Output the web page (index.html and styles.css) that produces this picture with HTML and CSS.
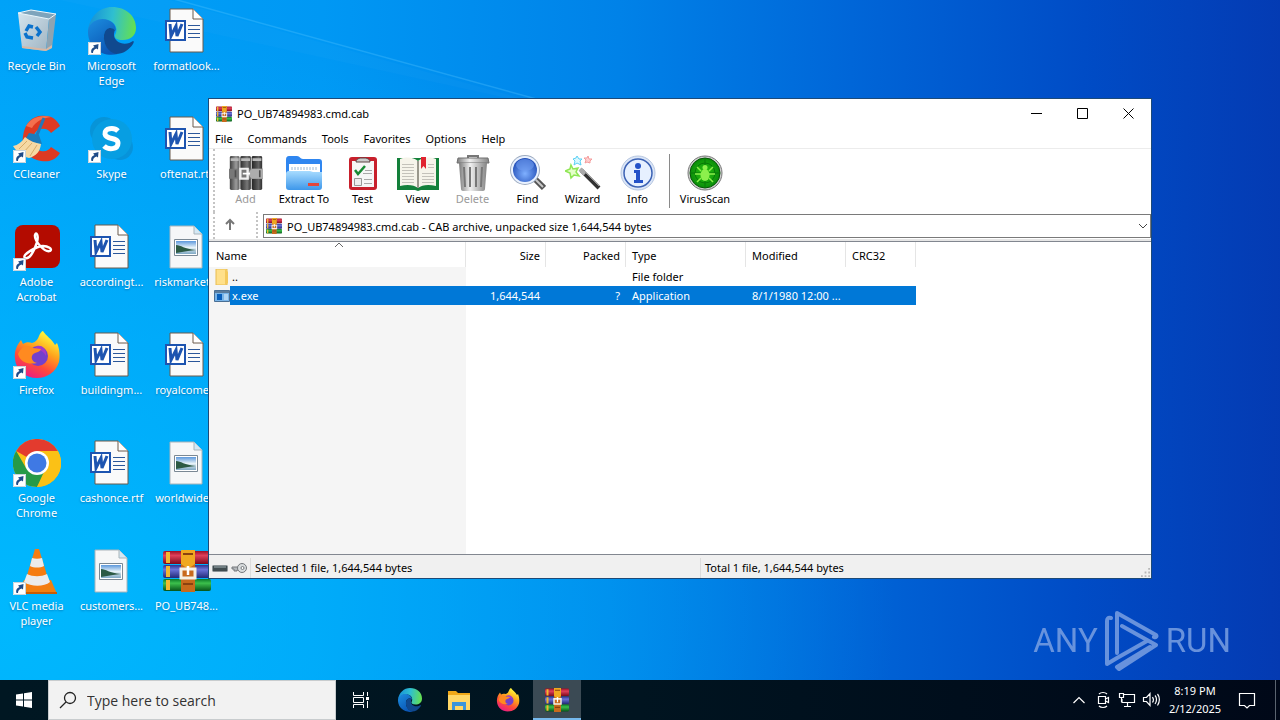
FILE: index.html
```html
<!DOCTYPE html>
<html lang="en">
<head>
    <meta charset="UTF-8">
    <meta name="viewport" content="width=device-width, initial-scale=1.0">
    <title>Desktop</title>
    <link rel="stylesheet" href="styles.css">
</head>
<body>
    <!-- shared icons -->
    <svg class="sprite" aria-hidden="true">
        <defs>
            <linearGradient id="edge-top" x1="0" y1="0.4" x2="1" y2="0.5">
                <stop offset="0" stop-color="#1590d8"/><stop offset="0.5" stop-color="#2fbfd0"/><stop offset="1" stop-color="#66e04e"/>
            </linearGradient>
            <linearGradient id="edge-left" x1="0" y1="0" x2="0.6" y2="1">
                <stop offset="0" stop-color="#1c8ee0"/><stop offset="1" stop-color="#0a55b4"/>
            </linearGradient>
            <linearGradient id="fox" x1="0.8" y1="0" x2="0.3" y2="1">
                <stop offset="0.1" stop-color="#fff23a"/><stop offset="0.4" stop-color="#ffa41c"/><stop offset="0.7" stop-color="#ff4a3a"/><stop offset="1" stop-color="#ea1a86"/>
            </linearGradient>
            <linearGradient id="bin" x1="0" y1="0" x2="1" y2="1">
                <stop offset="0" stop-color="#d4e4ee"/><stop offset="1" stop-color="#9fb4c2"/>
            </linearGradient>
            <linearGradient id="red-book" x1="0" y1="0" x2="0" y2="1">
                <stop offset="0" stop-color="#9c1026"/><stop offset="0.35" stop-color="#e0405a"/><stop offset="1" stop-color="#7c0a1c"/>
            </linearGradient>
            <linearGradient id="blue-book" x1="0" y1="0" x2="0" y2="1">
                <stop offset="0" stop-color="#2c3490"/><stop offset="0.35" stop-color="#6a72d8"/><stop offset="1" stop-color="#222a78"/>
            </linearGradient>
            <linearGradient id="green-book" x1="0" y1="0" x2="0" y2="1">
                <stop offset="0" stop-color="#0a7a28"/><stop offset="0.35" stop-color="#3cc04c"/><stop offset="1" stop-color="#06541a"/>
            </linearGradient>
            <linearGradient id="folder" x1="0" y1="0" x2="0" y2="1">
                <stop offset="0" stop-color="#a8dcff"/><stop offset="1" stop-color="#3d97ea"/>
            </linearGradient>
            <linearGradient id="metal" x1="0" y1="0" x2="1" y2="0">
                <stop offset="0" stop-color="#7c7c7c"/><stop offset="0.4" stop-color="#f0f0f0"/><stop offset="1" stop-color="#848484"/>
            </linearGradient>
            <radialGradient id="lens" cx="0.5" cy="0.65" r="0.6">
                <stop offset="0" stop-color="#7fb0ff"/><stop offset="1" stop-color="#2450b8"/>
            </radialGradient>
            <radialGradient id="radar">
                <stop offset="0" stop-color="#2cc810"/><stop offset="1" stop-color="#0a8c0a"/>
            </radialGradient>
            <linearGradient id="sky" x1="0" y1="0" x2="0" y2="1">
                <stop offset="0" stop-color="#5c98dc"/><stop offset="0.5" stop-color="#e6f2f8"/><stop offset="1" stop-color="#7ea8c4"/>
            </linearGradient>
        </defs>

        <symbol id="i-bin" viewBox="0 0 48 48">
            <path d="M5 6 18 3l25 4-7 5z" fill="#7ea4bc"/>
            <path d="m5 6 31 6-3 32-24-3z" fill="url(#bin)"/>
            <path d="m36 12 7-5-4 34-6 3z" fill="#8ea4b2"/>
            <path d="M5 6 18 3l25 4-7 5z" fill="none" stroke="#eef6fa"/>
            <path d="m9 39 24 3 6-4v3l-6 3-24-3z" fill="#d8b8a4"/>
            <g fill="none" stroke="#0b72cc" stroke-width="3.4"><path d="m13 24 3-5 4 1M23 20l4 5-3 4M20 31l-6-1-2-4"/></g>
        </symbol>
        <symbol id="i-edge" viewBox="0 0 48 48">
            <path d="M0 23C2 9 12 0 24 0c14 0 24 9 24 21 0 8-6 12-13 12-6 0-9-2-8-5 3-4 2-13-8-15C10 12 3 16 0 23z" fill="url(#edge-top)"/>
            <path d="M0 23c2-9 12-13 20-10 6 2 8 7 8 11-4-5-11-3-12 4-1 8 4 17 14 19C14 51-1 40 0 23z" fill="url(#edge-left)"/>
            <path d="M16 28c1-7 7-9 11-5-2 5-1 8 2 11 5 4 12 3 16 0 1 0 1 1 0 3-4 6-10 10-17 10-8-2-13-10-12-19z" fill="#10498f"/>
        </symbol>
        <symbol id="i-word" viewBox="2 0 48 48">
            <path d="M9 2h23l10 10v33H9z" fill="#fafafa" stroke="#6b5a4c"/>
            <path d="M32 2v10h10" fill="#fff" stroke="#6b5a4c"/>
            <path d="M27 18.500h12M27 22.500h12M27 26.500h12M27 30.500h12" stroke="#2b579a"/>
            <path d="M4 13h21v21H4z" fill="#1d54b0"/>
            <path d="M6 15h17v17H6z" fill="#fff"/>
            <path d="m9 17 1 12 5-10 1 10 5-12" fill="none" stroke="#1d54b0" stroke-width="3"/>
        </symbol>
        <symbol id="i-image" viewBox="1 0 48 48">
            <path d="M8 3h24l8 8v34H8z" fill="#f6f7f8" stroke="#a9b4ba"/>
            <path d="M32 3v8h8" fill="#d4e8f4" stroke="#a9b4ba"/>
            <path d="M12.500 16.500h23v16h-23z" fill="#fff" stroke="#7a8894"/>
            <path d="M14 18h20v13H14z" fill="url(#sky)"/>
            <path d="M14 22c5 0 8 4 20 5l-8 1-12 2z" fill="#2c5a44"/>
        </symbol>
        <symbol id="i-ccleaner" viewBox="0 0 48 48">
            <path d="m47 11-9 7c-3-5-12-6-16 0-5 7-1 17 6 18 5 1 8-1 10-4l9 6c-5 8-12 9-19 8-13-2-20-12-18-25C12 7 21-1 33 1c6 0 11 4 14 10z" fill="#dd3a22"/>
            <path d="M13 11C18 2 29-1 38 2c-8 1-15 4-19 11z" fill="#f4704e"/>
            <path d="m31 3-7 17" stroke="#2377b8" stroke-width="3"/>
            <path d="m16 18 10 2 3 9-8-1-8-5z" fill="#1b7cbc"/>
            <path d="M12 22c5 4 10 6 16 7-1 8-5 12-12 14C9 41 4 37 0 31c5-1 9-4 12-9z" fill="#f6d9a4"/>
            <path d="m14 26-8 8m13-6-9 10m14-8-7 11" stroke="#d8ab68"/>
        </symbol>
        <symbol id="i-skype" viewBox="0 0 48 48">
            <circle cx="16" cy="16" r="14" fill="#0794d8"/><circle cx="32" cy="32" r="13" fill="#0793da"/>
            <circle cx="24" cy="24" r="20" fill="#079ee2"/>
            <path d="M30 16c-4-4-14-3-13 3 1 6 13 3 13 9 0 7-10 7-14 3" fill="none" stroke="#fff" stroke-width="5"/>
        </symbol>
        <symbol id="i-acrobat" viewBox="0 0 48 48">
            <rect x="2" y="2" width="45" height="43" rx="8" fill="#b30b00"/>
            <path d="M12 35c-4-3 12-12 18-12 5 0 10 3 7 5-5 2-16-10-15-16 1-4 4 0 2 7-3 10-8 18-12 16z" fill="none" stroke="#fff" stroke-width="2.4"/>
        </symbol>
        <symbol id="i-firefox" viewBox="0 0 48 48">
            <path d="M2 28C1 20 4 14 8 9l2 4c3-2 6-2 9-1 4-1 6-4 7-7 1-3 3-5 4-5 3 5 9 8 12 14l2-2c3 7 3 14 2 19-3 10-12 16-22 16C12 47 3 39 2 28z" fill="url(#fox)"/>
            <circle cx="25" cy="25" r="10" fill="#7340cc"/>
            <path d="M24 15c6-1 10 4 9 10-3-6-8-7-13-5z" fill="#a33ac8"/>
            <path d="M5 23c4-8 9-10 15-6l8 1c-1 4-8 3-9 7-1 3 1 6 5 7-9 2-17-1-19-9z" fill="#ff8a20"/>
        </symbol>
        <symbol id="i-chrome" viewBox="0 0 48 48">
            <circle cx="24" cy="24" r="24" fill="#fbc116"/>
            <path d="M24 24 3.200 12A24 24 0 0 1 44.800 12z" fill="#e33b2e"/>
            <path d="M24 24h11L24 48A24 24 0 0 1 3.200 12L13 29z" fill="#269a47"/>
            <path d="M24 12h21a24 24 0 0 1-21 36l11-18z" fill="#fbc116"/>
            <circle cx="24" cy="24" r="12" fill="#fff"/><circle cx="24" cy="24" r="9.500" fill="#3f79e4"/>
        </symbol>
        <symbol id="i-vlc" viewBox="0 0 48 48">
            <path d="M11 33h27l6 14H5z" fill="#f08010"/><path d="M5 45h39v2H5z" fill="#c85c04"/>
            <path d="M22 2h4l11 36c-6 6-20 6-26 0z" fill="#f57d12"/>
            <path d="m19 11-2 8c4 2 10 2 14 0l-2-8c-3 1-7 1-10 0zM14 27l-3 8c7 5 20 5 26 0l-3-8c-6 3-14 3-20 0z" fill="#ececec"/>
        </symbol>
        <symbol id="i-winrar" viewBox="0 0 48 42" preserveAspectRatio="none">
            <rect y="1" width="48" height="13" rx="2" fill="url(#red-book)"/>
            <rect y="15" width="48" height="13" rx="2" fill="url(#blue-book)"/>
            <rect y="29" width="48" height="12" rx="2" fill="url(#green-book)"/>
            <path d="M3 2h4v11H3zM3 16h4v11H3zM3 30h4v10H3z" fill="#f0b830"/>
            <path d="M18 0h14v42H18z" fill="#c86a1c"/><path d="M18 0h14v14l-7 5-7-5z" fill="#f0a820"/>
            <path d="M20 4h10M20 34h10" stroke="#8a4210" stroke-width="2"/>
            <path d="M18 19h14v9H18z" fill="none" stroke="#f4f0e4" stroke-width="3"/>
            <path d="M25 16v9" stroke="#fff" stroke-width="2.500"/>
        </symbol>
        <symbol id="i-shortcut" viewBox="0 0 13 13">
            <path d="M0 0h13v13H0z" fill="#fff"/><path d="M.5.5h12v12H.5z" fill="none" stroke="#c8d4dc"/>
            <path d="M3.500 11c-1-3 .5-5 3-6L5 3.500 10.500 2 10 7.500 8.500 6.500C6 7.500 5 8.500 5 11z" fill="#1f4b88"/>
        </symbol>
    </svg>

    <main class="desktop">
        <svg class="beam" viewBox="0 0 600 120" aria-hidden="true">
            <path d="M60 0h110l400 112z" fill="#fff" opacity=".02"/>
            <path d="M170-2 540 100" stroke="#5cc8ff" stroke-width="1.500" opacity=".3"/>
        </svg>

        <div class="shortcuts">
            <button class="shortcut"><svg><use href="#i-bin"/></svg><span>Recycle Bin</span></button>
            <button class="shortcut"><svg><use href="#i-ccleaner"/></svg><svg class="arrow"><use href="#i-shortcut"/></svg><span>CCleaner</span></button>
            <button class="shortcut"><svg><use href="#i-acrobat"/></svg><svg class="arrow"><use href="#i-shortcut"/></svg><span>Adobe<br>Acrobat</span></button>
            <button class="shortcut"><svg><use href="#i-firefox"/></svg><svg class="arrow"><use href="#i-shortcut"/></svg><span>Firefox</span></button>
            <button class="shortcut"><svg><use href="#i-chrome"/></svg><svg class="arrow"><use href="#i-shortcut"/></svg><span>Google<br>Chrome</span></button>
            <button class="shortcut"><svg><use href="#i-vlc"/></svg><svg class="arrow"><use href="#i-shortcut"/></svg><span>VLC media<br>player</span></button>
            <button class="shortcut"><svg><use href="#i-edge"/></svg><svg class="arrow"><use href="#i-shortcut"/></svg><span>Microsoft<br>Edge</span></button>
            <button class="shortcut"><svg><use href="#i-skype"/></svg><svg class="arrow"><use href="#i-shortcut"/></svg><span>Skype</span></button>
            <button class="shortcut"><svg><use href="#i-word"/></svg><span>accordingt...</span></button>
            <button class="shortcut"><svg><use href="#i-word"/></svg><span>buildingm...</span></button>
            <button class="shortcut"><svg><use href="#i-word"/></svg><span>cashonce.rtf</span></button>
            <button class="shortcut"><svg><use href="#i-image"/></svg><span>customers...</span></button>
            <button class="shortcut"><svg><use href="#i-word"/></svg><span>formatlook...</span></button>
            <button class="shortcut"><svg><use href="#i-word"/></svg><span>oftenat.rtf</span></button>
            <button class="shortcut"><svg><use href="#i-image"/></svg><span>riskmarket...</span></button>
            <button class="shortcut"><svg><use href="#i-word"/></svg><span>royalcome...</span></button>
            <button class="shortcut"><svg><use href="#i-image"/></svg><span>worldwide...</span></button>
            <button class="shortcut"><svg class="archive"><use href="#i-winrar"/></svg><span>PO_UB748...</span></button>
        </div>

        <div class="watermark">
            <span>ANY</span>
            <svg viewBox="0 0 54 62" aria-hidden="true">
                <g fill="none" stroke="currentColor" stroke-width="4" stroke-linejoin="round" stroke-linecap="round">
                    <path d="M6 8c-3-1-4 1-4 3v43l10-6 30-17"/>
                    <path d="M12 43V3l39 22c1 1 0 3-2 2"/>
                    <path d="m17 16 34 19-37 24-2-2 33-20"/>
                </g>
            </svg>
            <span>RUN</span>
        </div>

        <section class="window">
            <header class="titlebar">
                <svg class="app-icon"><use href="#i-winrar"/></svg>
                <span class="title">PO_UB74894983.cmd.cab</span>
                <button class="caption" aria-label="Minimize"><svg viewBox="0 0 11 11"><path d="M0 5.500h11"/></svg></button>
                <button class="caption" aria-label="Maximize"><svg viewBox="0 0 11 11"><path d="M.5.5h10v10H.5z"/></svg></button>
                <button class="caption" aria-label="Close"><svg viewBox="0 0 11 11"><path d="m.5.5 10 10m0-10-10 10"/></svg></button>
            </header>

            <nav class="menu">
                <button>File</button>
                <button>Commands</button>
                <button>Tools</button>
                <button>Favorites</button>
                <button>Options</button>
                <button>Help</button>
            </nav>

            <div class="bars">
                <div class="toolbar">
                    <button disabled>
                        <svg viewBox="0 0 36 36" class="gray"><g transform="rotate(90 18 18)"><use href="#i-winrar" x="1" y="1" width="34" height="34"/></g></svg>
                        Add
                    </button>
                    <button class="wide">
                        <svg viewBox="0 0 36 36">
                            <path d="M0 5c0-3 1-4 3-4h8c3 0 3 3 6 3h16c2 0 3 1 3 3v16H0z" fill="#2f86f0"/>
                            <path d="M3 9h31v12H3z" fill="#fff"/><path d="M6 12v3m3-3v3m3-3v3m3-3v3m3-3v3m3-3v3m3-3v3m3-3v3m3-3v3" stroke="#9cb8d4"/>
                            <path d="M0 19c0-2 1-3 3-3h21l3 1h9v15c0 2-1 3-3 3H3c-2 0-3-1-3-3z" fill="url(#folder)"/>
                            <path d="M22 28h11v3H22z" fill="#e4463a"/>
                        </svg>
                        Extract To
                    </button>
                    <button>
                        <svg viewBox="0 0 36 36">
                            <rect x="4" y="2" width="28" height="33" rx="3" fill="#c8202c"/>
                            <path d="M7 6h22v26H7z" fill="#f6f6f6"/>
                            <path d="M11 7c0-3 2-3 4-4h6c2 1 4 1 4 4z" fill="#ccc" stroke="#5c4444"/>
                            <path d="m10 15 3 4 7-8" fill="none" stroke="#178a34" stroke-width="2.500"/>
                            <path d="M9.500 23.500h7v7h-7z" fill="#eee" stroke="#999"/>
                            <path d="M20 15.500h7M18 18.500h9M19 24.500h8M19 28.500h8" stroke="#a8a8a8"/>
                        </svg>
                        Test
                    </button>
                    <button>
                        <svg viewBox="0 0 42 36" class="book">
                            <path d="M0 3h42v32H24l-3 1-3-1H0z" fill="#13803a"/>
                            <path d="M3 4c8-3 14-1 18 2 4-3 10-5 18-2v27c-8-2-14-1-18 2-4-3-10-4-18-2z" fill="#f6f4ea"/>
                            <path d="M21 6v27" stroke="#9a988c" stroke-width="2"/>
                            <path d="M5 9.500h12M5 12.500h12M5 15.500h12M5 18.500h12M5 21.500h12M5 24.500h12M5 27.500h12M31 9.500h6M31 12.500h6M25 18.500h12M25 21.500h12M25 24.500h12M25 27.500h12" stroke="#c4c2ba"/>
                            <path d="M24 2h5v12l-2.500-3-2.500 3z" fill="#e02430"/>
                        </svg>
                        View
                    </button>
                    <button disabled>
                        <svg viewBox="0 0 36 36">
                            <path d="M13 3V1h10v2" fill="none" stroke="#777" stroke-width="2"/>
                            <path d="M3 3h30l1 5H2z" fill="url(#metal)" stroke="#707070"/>
                            <path d="M4 8h28l-2 26c0 1-1 2-2 2H8c-1 0-2-1-2-2z" fill="url(#metal)"/>
                            <path d="m9 12 1 20m5-20v20m6-20v20m6-20-1 20" stroke="#777" stroke-width="2"/>
                        </svg>
                        Delete
                    </button>
                    <button>
                        <svg viewBox="0 0 36 36">
                            <path d="m25 24 9 9" stroke="#555" stroke-width="6"/><path d="m24 23 9 9" stroke="#c8c8c8" stroke-width="2"/>
                            <circle cx="15" cy="15" r="15" fill="#9dabc0"/><circle cx="15" cy="15" r="14" fill="#eaf2ff"/>
                            <circle cx="15" cy="15" r="12" fill="url(#lens)"/><ellipse cx="15" cy="10" rx="9" ry="6" fill="#6f9cf0" opacity=".6"/>
                        </svg>
                        Find
                    </button>
                    <button>
                        <svg viewBox="0 0 36 36">
                            <path d="m16 15 18 18" stroke="#333" stroke-width="4"/><path d="m15 14 5 5" stroke="#aaa" stroke-width="4"/><path d="m20 17 14 14" stroke="#999"/>
                            <path d="m6 10 2 4 5-1-2 4 3 4-5-1-3 3-1-5-5-2 5-2z" fill="#e4ffc8" stroke="#8fe654" stroke-width="1.500"/>
                            <path d="m12 1 2 3h3l-2 2 1 4-4-2-3 2 1-4-2-2 3-1z" fill="#d8f8ff" stroke="#5cd0f4"/>
                            <path d="m23 1 1 3h3l-2 2v2l-3-1-2 1 1-3-2-2h3z" fill="#ffd0d0" stroke="#f49c9c"/>
                        </svg>
                        Wizard
                    </button>
                    <button>
                        <svg viewBox="0 0 36 36">
                            <circle cx="18" cy="18" r="17" fill="#dbe6f8" stroke="#b6c6e0"/>
                            <circle cx="18" cy="18" r="14" fill="#e6f0ff" stroke="#3c62b4" stroke-width="1.500"/>
                            <circle cx="18" cy="11" r="3" fill="#2452c8"/>
                            <path d="M14 15h6v10h3v3h-9v-3h2v-7h-2z" fill="#2452c8"/>
                        </svg>
                        Info
                    </button>
                    <span class="divider"></span>
                    <button class="wide">
                        <svg viewBox="0 0 36 36">
                            <circle cx="18" cy="18" r="17" fill="#d0d0d0" stroke="#777"/><circle cx="18" cy="18" r="15" fill="url(#radar)" stroke="#075407"/>
                            <path d="M18 3v30M3 18h30" stroke="#087808"/><circle cx="18" cy="18" r="10" fill="none" stroke="#087808"/>
                            <g stroke="#8cf04c" stroke-width="1.500" fill="none"><path d="m10 12 4 4m12-4-4 4M8 19h6m8 0h6M10 27l4-4m12 4-4-4"/></g>
                            <ellipse cx="18" cy="20" rx="4.500" ry="6" fill="#8cf04c"/><circle cx="18" cy="12.500" r="2.500" fill="#8cf04c"/>
                        </svg>
                        VirusScan
                    </button>
                </div>

                <div class="address-row">
                    <button class="up" aria-label="Up one level"><svg viewBox="0 0 12 12"><path d="M6 12V2M2 6l4-4 4 4"/></svg></button>
                    <div class="address">
                        <svg class="app-icon"><use href="#i-winrar"/></svg>
                        <select aria-label="Archive path">
                            <option>PO_UB74894983.cmd.cab - CAB archive, unpacked size 1,644,544 bytes</option>
                        </select>
                        <svg class="chevron" viewBox="0 0 10 6"><path d="m1 1 4 4 4-4"/></svg>
                    </div>
                </div>
            </div>

            <div class="list">
                <table>
                    <colgroup>
                        <col class="c-name"><col class="c-size"><col class="c-size"><col class="c-type"><col class="c-date"><col class="c-crc">
                    </colgroup>
                    <thead>
                        <tr>
                            <th class="sorted">Name<svg viewBox="0 0 10 6"><path d="m1 5 4-4 4 4"/></svg></th>
                            <th class="num">Size</th>
                            <th class="num">Packed</th>
                            <th>Type</th>
                            <th>Modified</th>
                            <th>CRC32</th>
                        </tr>
                    </thead>
                    <tbody>
                        <tr>
                            <td class="name">
                                <div>
                                    <svg viewBox="0 0 16 16"><path d="M2 0h11v16H2z" fill="#ffe08a" stroke="#e8bc50"/><path d="m11 0 3 3v11l-3 2z" fill="#f4c95c"/></svg>
                                    <span>..</span>
                                </div>
                            </td>
                            <td></td>
                            <td></td>
                            <td>File folder</td>
                            <td></td>
                            <td></td>
                        </tr>
                        <tr class="selected">
                            <td class="name">
                                <div>
                                    <svg viewBox="0 0 16 16"><path d="M.5 2.500h15v11H.5z" fill="#79b4e8" stroke="#4a6f94"/><path d="M1 3h14v2H1z" fill="#5c7c9c"/><path d="M3 6h5v6H3z" fill="#0a60bc"/><path d="M10 7h4m-4 2h4m-4 2h4" stroke="#e8f4ff"/></svg>
                                    <span>x.exe</span>
                                </div>
                            </td>
                            <td class="num">1,644,544</td>
                            <td class="num">?</td>
                            <td>Application</td>
                            <td>8/1/1980 12:00 ...</td>
                            <td></td>
                        </tr>
                    </tbody>
                </table>
            </div>

            <footer class="status">
                <div class="status-icons">
                    <svg viewBox="0 0 16 12"><rect x=".5" y="3.500" width="15" height="6" rx="1" fill="#404c50" stroke="#8c9498"/><path d="M2 5h12" stroke="#a0b0b4"/></svg>
                    <svg viewBox="0 0 16 12"><path d="M1 5h7v3H6v1H3V7H1z" fill="#b4b8bc" stroke="#74787c"/><circle cx="11" cy="6" r="4.500" fill="#d8dcde" stroke="#74787c"/><circle cx="11.500" cy="6" r="1.500" fill="#fff" stroke="#74787c"/></svg>
                </div>
                <p>Selected 1 file, 1,644,544 bytes</p>
                <p>Total 1 file, 1,644,544 bytes</p>
                <svg class="grip" viewBox="0 0 10 10"><path d="M8 0h2v2H8zM4 4h2v2H4zM8 4h2v2H8zM0 8h2v2H0zM4 8h2v2H4zM8 8h2v2H8z"/></svg>
            </footer>
        </section>
    </main>

    <footer class="taskbar">
        <button class="start" aria-label="Start">
            <svg viewBox="0 0 16 16"><path d="m0 2.500 7-1v6H0zM8 1.300 16 0v7.500H8zM0 8.500h7v6l-7-1zM8 8.500h8V16l-8-1.300z" fill="#fff"/></svg>
        </button>
        <label class="search">
            <svg viewBox="0 0 18 18"><circle cx="11" cy="7" r="5.500"/><path d="m7 11-6 6"/></svg>
            <input type="text" placeholder="Type here to search" aria-label="Type here to search">
        </label>
        <button class="task" aria-label="Task View">
            <svg viewBox="0 0 24 24" class="line"><path d="M4.500 4v3.500h10V4M4.500 20v-3.500h10V20M4.500 9.500h10v5h-10zM18.500 4v4m0 5v7"/><path d="M17 9h3v3h-3z" fill="#fff" stroke="none"/></svg>
        </button>
        <button class="task" aria-label="Microsoft Edge"><svg><use href="#i-edge"/></svg></button>
        <button class="task" aria-label="File Explorer">
            <svg viewBox="0 0 24 24"><path d="M1 3h8l2 2h12v17H1z" fill="#f0a818"/><path d="M1 7h22v15H1z" fill="#ffd766"/><path d="M5 22v-8h14v8h-3v-4H8v4z" fill="#3a95dc"/></svg>
        </button>
        <button class="task" aria-label="Firefox"><svg><use href="#i-firefox"/></svg></button>
        <button class="task active" aria-label="WinRAR"><svg><use href="#i-winrar"/></svg></button>

        <div class="tray">
            <button aria-label="Show hidden icons"><svg viewBox="0 0 18 18"><path d="m3.500 12 5.500-5.500 5.500 5.500"/></svg></button>
            <button aria-label="Meet Now"><svg viewBox="0 0 18 18"><path d="M4.500 5.500h7v7h-7zM11.500 8l3-1.500v5l-3-1.500M5 3c2-2 6-2 8 0M5 15c2 2 6 2 8 0"/></svg></button>
            <button aria-label="Network"><svg viewBox="0 0 18 18"><path d="M6 3.500h10.500v8H4V8M9.500 12v3.500M6 15.500h7M1.500 2.500h4v4h-4zM3.500 7v4"/></svg></button>
            <button aria-label="Volume"><svg viewBox="0 0 18 18"><path d="M1.500 6.500h3l3.500-4v12l-3.500-4h-3zM10.500 6c1 1.500 1 4 0 5.500M13 4.500c2 2 2 6 0 8.500M15.500 3c2.500 3 2.500 8 0 11.500"/></svg></button>
            <button class="clock"><span>8:19 PM</span><span>2/12/2025</span></button>
            <button class="notes" aria-label="Notifications"><svg viewBox="0 0 18 18"><path d="M1.500 2.500h15v12h-5l-2.500 2.500-2.500-2.500h-5z"/></svg></button>
            <button class="peek" aria-label="Show desktop"></button>
        </div>
    </footer>
</body>
</html>
```

FILE: styles.css
```css
* {
    box-sizing: border-box;
}
body {
    margin: 0;
    height: 100vh;
    display: flex;
    flex-direction: column;
    overflow: hidden;
    font-family: "Noto Sans", "Open Sans", sans-serif;
    font-size: 11px;
    line-height: 15px;
    color: #000;
}
button {
    font: inherit;
    color: inherit;
    background: none;
    border: 0;
    padding: 0;
}
.sprite {
    position: absolute;
    width: 0;
    height: 0;
}

/* Desktop */
.desktop {
    position: relative;
    flex: 1;
    min-height: 0;
    background:
        radial-gradient(ellipse 70% 90% at 0% 90%, rgba(0, 188, 255, 0.85), rgba(0, 180, 255, 0)),
        linear-gradient(91deg, #00a2f8 0%, #0098f4 25%, #0082e8 48%, #0066d8 66%, #004cc6 84%, #043ab2 100%);
}
.beam {
    position: absolute;
    left: 0;
    top: 0;
    width: 600px;
    height: 120px;
}
.shortcuts {
    display: grid;
    grid-template-rows: repeat(6, 108px);
    grid-auto-flow: column;
    grid-auto-columns: 75px;
    width: max-content;
}
.shortcut {
    position: relative;
    display: flex;
    flex-direction: column;
    align-items: center;
    gap: 3px;
    padding: 7px 2px 0 0;
    color: #fff;
    text-shadow: 0 1px 2px rgba(0, 40, 90, 0.4);
    white-space: nowrap;
}
.shortcut svg {
    width: 48px;
    height: 48px;
    flex: none;
}
.shortcut .archive {
    height: 42px;
    margin: 3px 0;
}
.shortcut .arrow {
    position: absolute;
    left: 13px;
    top: 42px;
    width: 13px;
    height: 13px;
}
.watermark {
    position: absolute;
    right: 49px;
    bottom: 8px;
    display: flex;
    align-items: center;
    gap: 7px;
    color: #7aa0e2;
    opacity: 0.85;
    font-family: Roboto, sans-serif;
    font-size: 33px;
    line-height: 62px;
}
.watermark svg {
    width: 54px;
    height: 62px;
}

/* Archive window */
.window {
    position: absolute;
    left: 208px;
    top: 98px;
    right: 128px;
    bottom: 101px;
    display: flex;
    flex-direction: column;
    background: #fff;
    border: 1px solid #1d4a78;
}
.titlebar {
    display: flex;
    align-items: center;
    height: 29px;
    padding-left: 7px;
}
.app-icon {
    width: 16px;
    height: 16px;
    flex: none;
}
.title {
    flex: 1;
    padding-left: 5px;
}
.caption {
    width: 46px;
    height: 29px;
    display: grid;
    place-items: center;
}
.caption svg {
    width: 11px;
    height: 11px;
    fill: none;
    stroke: #000;
}
.menu {
    display: flex;
    gap: 15px;
    height: 21px;
    padding: 0 6px;
    border-bottom: 1px solid #ececec;
}
.bars {
    padding-left: 4px;
    border-bottom: 2px solid #e6e6e6;
}
.toolbar {
    display: flex;
    align-items: center;
    height: 63px;
    padding-left: 3px;
    border-left: 2px dotted #c4c4c4;
}
.toolbar button {
    display: flex;
    flex-direction: column;
    align-items: center;
    width: 55px;
    white-space: nowrap;
}
.toolbar .wide {
    width: 62px;
}
.toolbar button:disabled {
    color: #9a9a9a;
}
.toolbar svg {
    width: 36px;
    height: 36px;
}
.toolbar .book {
    width: 42px;
}
.toolbar .gray {
    filter: grayscale(1);
}
.toolbar .divider {
    width: 1px;
    height: 54px;
    margin: 0 4px;
    background: #8a8a8a;
}
.address-row {
    display: flex;
    height: 27px;
    padding-bottom: 1px;
    border-left: 2px dotted #c4c4c4;
}
.up {
    width: 43px;
    padding-right: 12px;
    border-right: 2px dotted #c4c4c4;
}
.up svg {
    width: 12px;
    height: 12px;
    fill: none;
    stroke: #777;
    stroke-width: 2;
}
.address {
    flex: 1;
    display: flex;
    align-items: center;
    height: 24px;
    margin: 2px 0 0 5px;
    padding: 0 2px;
    border: 1px solid #7a7a7a;
}
.address select {
    flex: 1;
    min-width: 0;
    appearance: none;
    border: 0;
    padding: 0 0 0 5px;
    background: none;
    font: inherit;
    color: inherit;
}
.chevron {
    width: 10px;
    height: 6px;
    fill: none;
    stroke: #444;
}
.list {
    flex: 1;
    min-height: 0;
    border-top: 1px solid #828790;
    border-bottom: 1px solid #828790;
    background: linear-gradient(#f5f5f5, #f5f5f5) no-repeat 0 0 / 257px 100%;
}
.list table {
    table-layout: fixed;
    width: 707px;
    border-spacing: 0;
}
.c-name {
    width: 257px;
}
.c-size {
    width: 80px;
}
.c-type {
    width: 120px;
}
.c-date {
    width: 100px;
}
.c-crc {
    width: 70px;
}
.list thead {
    background: #fff;
}
.list th {
    position: relative;
    height: 25px;
    padding: 2px 5px 0 6px;
    border-right: 1px solid #e5e5e5;
    font-weight: normal;
    text-align: left;
}
.list th:first-child {
    padding-left: 7px;
}
.sorted svg {
    position: absolute;
    left: 125px;
    top: 0;
    width: 10px;
    height: 6px;
    fill: none;
    stroke: #666;
}
.list td {
    height: 19px;
    padding: 0 6px;
    white-space: nowrap;
}
.list th.num,
.list td.num {
    text-align: right;
}
.list td.name {
    padding: 0 0 0 5px;
}
.name div {
    display: flex;
    align-items: center;
}
.name svg {
    width: 16px;
    height: 16px;
}
.name span {
    flex: 1;
    padding-left: 2px;
    line-height: 19px;
}
.selected {
    color: #fff;
}
.selected td:not(.name),
.selected .name span {
    background: #0078d7;
}
.status {
    position: relative;
    display: flex;
    align-items: center;
    height: 23px;
    padding: 3px 1px 0 3px;
    background: #f0f0f0;
}
.status-icons {
    display: flex;
    gap: 3px;
    width: 38px;
}
.status-icons svg {
    width: 16px;
    height: 12px;
}
.status p {
    flex: 1;
    margin: 0;
    padding-left: 4px;
    border-left: 1px solid #dcdcdc;
    line-height: 20px;
}
.grip {
    position: absolute;
    right: 1px;
    bottom: 1px;
    width: 9px;
    height: 9px;
    fill: #b8b8b8;
}

/* Taskbar */
.taskbar {
    display: flex;
    height: 40px;
    background: linear-gradient(90deg, #001722, #001420 50%, #000818);
    color: #fff;
}
.start {
    width: 48px;
    display: grid;
    place-items: center;
}
.start svg {
    width: 16px;
    height: 16px;
}
.search {
    display: flex;
    align-items: center;
    gap: 10px;
    width: 288px;
    padding: 0 10px;
    background: #f2f2f2;
    border: 1px solid #c8ccce;
}
.search svg {
    width: 18px;
    height: 18px;
    fill: none;
    stroke: #222;
    stroke-width: 1.3;
}
.search input {
    flex: 1;
    min-width: 0;
    padding: 0;
    border: 0;
    background: none;
    font-family: "Open Sans", sans-serif;
    font-size: 14px;
}
.search input::placeholder {
    color: #333;
    opacity: 1;
}
.task {
    width: 48px;
    margin-left: 1px;
    padding: 8px 12px;
}
.task svg {
    display: block;
    width: 24px;
    height: 24px;
}
.task .line {
    fill: none;
    stroke: #fff;
}
.task.active {
    background: #3b4a54;
    border-bottom: 2px solid #76b9ed;
}
.tray {
    display: flex;
    margin-left: auto;
}
.tray button {
    width: 24px;
    display: grid;
    place-items: center;
}
.tray svg {
    width: 18px;
    height: 18px;
    fill: none;
    stroke: #fff;
    stroke-width: 1.2;
}
.tray .clock {
    width: 64px;
    align-content: center;
    line-height: 18px;
}
.tray .notes {
    width: 40px;
}
.tray .peek {
    width: 5px;
    margin-left: 8px;
    border-left: 1px solid #5a6470;
}
```
